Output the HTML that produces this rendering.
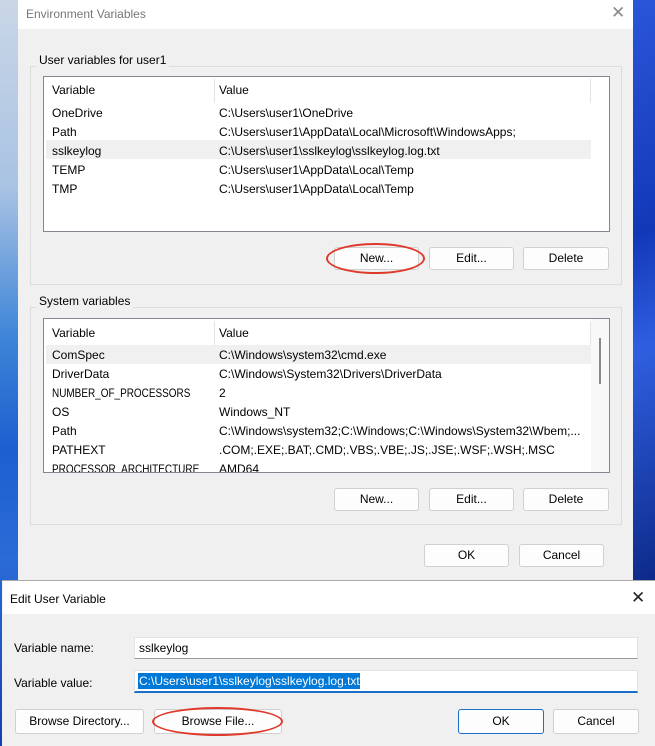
<!DOCTYPE html>
<html><head><meta charset="utf-8"><style>
*{box-sizing:border-box;margin:0;padding:0}
body{width:655px;height:746px;position:relative;overflow:hidden;font-family:"Liberation Sans",sans-serif;font-size:12px;color:#000;
background:linear-gradient(180deg,#c9d6e6 0%,#a9c3e3 25%,#3f86d8 45%,#1d5fcf 60%,#2a6bd8 75%,#153fa8 100%)}
.abs{position:absolute}
.win{left:18px;top:0;width:615px;height:580px;background:#f0f0f0}
.tb{left:18px;top:0;width:615px;height:29px;background:#fff}
.grp{border:1px solid #dcdcdc}
.list{background:#fff;border:1px solid #828790}
.btn{position:absolute;background:#fdfdfd;border:1px solid #d0d0d0;border-radius:3px;text-align:center;line-height:21px;font-size:12px}
.lbl{position:absolute;background:#f0f0f0;padding:0 3px;font-size:12px}
.row{position:absolute;left:8px;font-size:12px;white-space:nowrap}
.n{transform:scaleX(0.83);transform-origin:left}
.ell{position:absolute;border:2px solid #e0392b;border-radius:50%}
</style></head><body>
<div class="abs" style="left:633px;top:0;width:22px;height:580px;background:linear-gradient(160deg,#2b56d8,#1238b8 40%,#2f5fe0 60%,#0d2a8a)"></div>
<div class="abs win"></div>
<div class="abs tb"></div>
<div class="abs" style="left:26px;top:7px;color:#777;font-size:12px">Environment Variables</div>
<div class="abs" style="left:611px;top:3px;color:#888;font-size:17px">✕</div>

<div class="abs grp" style="left:30px;top:66px;width:592px;height:219px"></div>
<div class="lbl" style="left:36px;top:53px">User variables for user1</div>
<div class="abs list" style="left:43px;top:76px;width:567px;height:156px">
 <div class="abs" style="left:170px;top:2px;width:1px;height:24px;background:#e5e5e5"></div>
 <div class="abs" style="left:546px;top:2px;width:1px;height:24px;background:#e5e5e5"></div>
 <div class="abs" style="left:2px;top:63px;width:545px;height:19px;background:#f0f0f0"></div>
 <div class="row" style="top:6px">Variable</div><div class="row" style="left:175px;top:6px">Value</div>
 <div class="row" style="top:29px">OneDrive</div><div class="row" style="left:175px;top:29px">C:\Users\user1\OneDrive</div>
 <div class="row" style="top:48px">Path</div><div class="row" style="left:175px;top:48px">C:\Users\user1\AppData\Local\Microsoft\WindowsApps;</div>
 <div class="row" style="top:67px">sslkeylog</div><div class="row" style="left:175px;top:67px">C:\Users\user1\sslkeylog\sslkeylog.log.txt</div>
 <div class="row" style="top:86px">TEMP</div><div class="row" style="left:175px;top:86px">C:\Users\user1\AppData\Local\Temp</div>
 <div class="row" style="top:105px">TMP</div><div class="row" style="left:175px;top:105px">C:\Users\user1\AppData\Local\Temp</div>
</div>
<div class="btn" style="left:334px;top:247px;width:85px;height:23px">New...</div>
<div class="btn" style="left:429px;top:247px;width:85px;height:23px">Edit...</div>
<div class="btn" style="left:523px;top:247px;width:86px;height:23px">Delete</div>
<div class="ell" style="left:326px;top:243px;width:99px;height:31px"></div>

<div class="abs grp" style="left:30px;top:307px;width:592px;height:218px"></div>
<div class="lbl" style="left:36px;top:294px">System variables</div>
<div class="abs list" style="left:43px;top:318px;width:567px;height:155px;overflow:hidden">
 <div class="abs" style="left:170px;top:2px;width:1px;height:24px;background:#e5e5e5"></div>
 <div class="abs" style="left:546px;top:2px;width:1px;height:24px;background:#e5e5e5"></div>
 <div class="abs" style="left:2px;top:26px;width:545px;height:19px;background:#f0f0f0"></div>
 <div class="abs" style="left:547px;top:0;width:19px;height:155px;background:#f8f8f8"></div>
 <div class="abs" style="left:555px;top:19px;width:2px;height:46px;background:#888"></div>
 <div class="row" style="top:7px">Variable</div><div class="row" style="left:175px;top:7px">Value</div>
 <div class="row" style="top:29px">ComSpec</div><div class="row" style="left:175px;top:29px">C:\Windows\system32\cmd.exe</div>
 <div class="row" style="top:48px">DriverData</div><div class="row" style="left:175px;top:48px">C:\Windows\System32\Drivers\DriverData</div>
 <div class="row n" style="top:67px">NUMBER_OF_PROCESSORS</div><div class="row" style="left:175px;top:67px">2</div>
 <div class="row" style="top:86px">OS</div><div class="row" style="left:175px;top:86px">Windows_NT</div>
 <div class="row" style="top:105px">Path</div><div class="row" style="left:175px;top:105px">C:\Windows\system32;C:\Windows;C:\Windows\System32\Wbem;...</div>
 <div class="row" style="top:124px">PATHEXT</div><div class="row" style="left:175px;top:124px">.COM;.EXE;.BAT;.CMD;.VBS;.VBE;.JS;.JSE;.WSF;.WSH;.MSC</div>
 <div class="row n" style="top:143px">PROCESSOR_ARCHITECTURE</div><div class="row" style="left:175px;top:143px">AMD64</div>
</div>
<div class="btn" style="left:334px;top:488px;width:85px;height:23px">New...</div>
<div class="btn" style="left:429px;top:488px;width:85px;height:23px">Edit...</div>
<div class="btn" style="left:523px;top:488px;width:86px;height:23px">Delete</div>

<div class="btn" style="left:424px;top:544px;width:85px;height:23px">OK</div>
<div class="btn" style="left:519px;top:544px;width:85px;height:23px">Cancel</div>

<div class="abs" style="left:2px;top:580px;width:653px;height:166px;background:#f0f0f0;border-top:1px solid #aaa"></div>
<div class="abs" style="left:3px;top:581px;width:652px;height:33px;background:#fff"></div>
<div class="abs" style="left:10px;top:592px;font-size:12px">Edit User Variable</div>
<div class="abs" style="left:631px;top:588px;font-size:17px;color:#222">✕</div>
<div class="abs" style="left:14px;top:641px">Variable name:</div>
<div class="abs" style="left:134px;top:637px;width:504px;height:22px;background:#fff;border:1px solid #e3e3e3;border-bottom-color:#999"></div>
<div class="abs" style="left:139px;top:641px">sslkeylog</div>
<div class="abs" style="left:14px;top:676px">Variable value:</div>
<div class="abs" style="left:134px;top:670px;width:504px;height:23px;background:#fff;border:1px solid #e3e3e3;border-bottom:2px solid #1a6fc9"></div>
<div class="abs" style="left:138px;top:673px;width:222px;height:16px;background:#0078d7"></div>
<div class="abs" style="left:139px;top:674px;color:#fff">C:\Users\user1\sslkeylog\sslkeylog.log.txt</div>
<div class="btn" style="left:15px;top:709px;width:129px;height:25px;line-height:23px">Browse Directory...</div>
<div class="btn" style="left:154px;top:709px;width:128px;height:25px;line-height:23px">Browse File...</div>
<div class="ell" style="left:152px;top:707px;width:131px;height:29px"></div>
<div class="btn" style="left:458px;top:709px;width:86px;height:25px;line-height:23px;border-color:#1a6fc9">OK</div>
<div class="btn" style="left:553px;top:709px;width:86px;height:25px;line-height:23px">Cancel</div>
</body></html>
